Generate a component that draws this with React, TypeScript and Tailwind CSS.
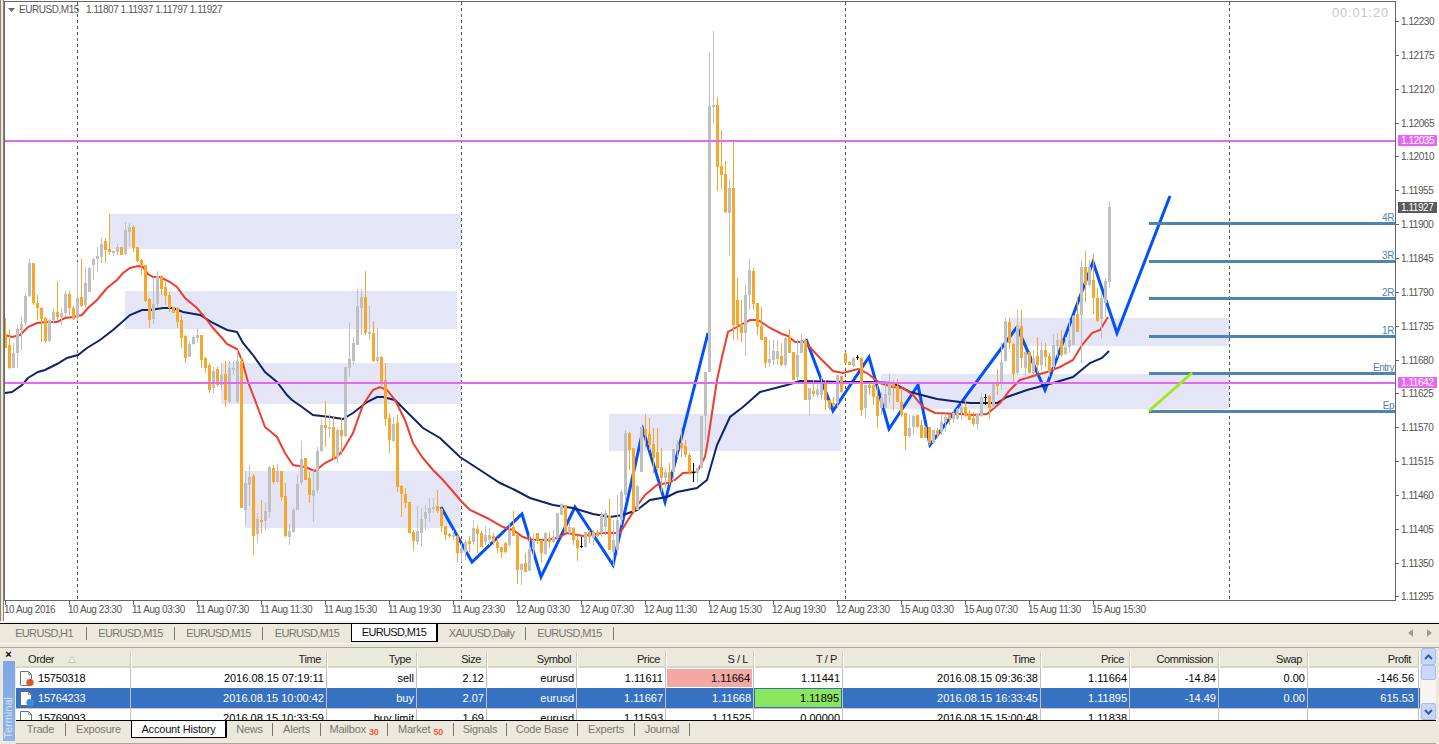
import React from 'react'

// [kind, high, low, bodyTop, bodyBottom], one bar every 4px starting at x=5
type Candle = [string, number, number, number, number]

const candles: Candle[] = [
  ['o',318,348,334,348],['o',329,369,345,368],['g',343,368,353,368],['g',325,368,329,353],['g',317,350,324,330],['g',293,325,296,323],
  ['g',259,297,263,296],['o',263,305,263,303],['o',295,320,303,308],['o',307,342,308,319],['o',317,343,318,341],['g',319,342,320,341],
  ['g',308,324,312,320],['o',281,320,312,317],['g',308,325,313,317],['g',291,317,294,313],['o',291,315,294,308],['o',306,320,308,319],
  ['g',262,321,298,318],['o',259,307,297,306],['g',267,308,283,305],['g',267,292,268,292],['g',258,280,259,265],['g',247,272,256,259],
  ['g',238,263,244,257],['o',238,263,241,250],['o',214,255,249,252],['g',250,256,251,253],['g',244,255,247,252],['o',247,255,247,255],
  ['g',222,255,230,254],['g',223,247,227,232],['o',225,252,227,248],['o',247,262,247,261],['o',259,275,260,266],['o',265,302,265,301],
  ['o',298,328,299,320],['g',277,324,304,319],['g',271,307,276,304],['o',275,295,276,289],['o',282,305,287,296],['o',292,312,295,308],
  ['o',307,313,307,313],['o',307,328,308,322],['o',315,348,320,338],['o',335,363,336,358],['g',341,357,344,357],['g',335,345,337,344],
  ['g',329,343,335,338],['o',335,368,335,360],['o',357,373,358,368],['o',363,393,365,390],['g',367,393,371,388],['o',367,387,369,385],
  ['g',363,390,375,385],['o',361,407,374,400],['g',361,403,368,402],['g',361,375,368,370],['g',350,403,361,402],['o',357,508,361,508],
  ['g',471,526,483,510],['g',465,506,477,485],['o',474,555,476,536],['g',513,543,519,534],['o',500,533,520,522],['g',503,530,511,521],
  ['g',466,518,467,512],['o',465,484,468,482],['g',464,483,471,482],['o',471,501,471,497],['o',483,537,496,536],['g',524,545,531,537],
  ['g',508,533,510,532],['g',475,510,484,510],['g',441,485,459,483],['o',458,480,458,480],['o',472,503,478,495],['g',470,522,490,496],
  ['g',447,493,451,490],['g',418,452,425,451],['o',401,447,425,428],['g',414,438,427,429],['o',417,460,427,458],['g',428,463,430,457],
  ['o',418,455,430,436],['g',367,437,367,436],['g',323,377,359,368],['g',337,365,343,361],['g',289,345,306,345],['g',289,335,297,308],
  ['o',271,335,297,333],['g',306,340,332,334],['o',321,362,333,361],['g',328,363,357,361],['o',356,385,357,383],['o',363,426,380,419],
  ['o',413,453,418,440],['g',417,442,424,441],['o',415,492,423,487],['o',485,517,486,494],['o',488,508,494,503],['o',502,533,502,533],
  ['o',530,551,532,541],['g',506,545,531,542],['g',508,547,519,533],['g',505,530,512,519],['g',498,522,508,513],['g',498,513,507,509],
  ['o',490,513,506,511],['o',508,532,509,526],['o',526,540,526,535],['o',533,538,534,536],['g',530,540,535,537],['o',535,562,536,553],
  ['g',543,562,548,553],['g',540,560,542,552],['o',536,552,541,544],['g',520,545,528,542],['o',525,553,529,534],
  ['o',531,547,533,547],['g',526,545,535,542],['g',528,545,535,540],['o',533,545,536,542],['o',538,553,542,548],['o',547,558,547,552],
  ['o',542,553,543,552],['g',523,547,530,545],['o',511,536,527,536],['o',535,584,535,570],['g',563,585,564,570],['o',553,572,563,572],
  ['g',533,570,549,571],['g',533,558,540,549],['o',533,544,533,541],['o',540,563,540,553],['g',532,555,533,554],['o',532,548,538,542],
  ['g',530,543,537,542],['g',513,540,513,538],['g',503,515,504,515],['o',505,533,505,532],['g',522,535,527,533],['o',527,545,528,540],
  ['o',535,561,540,548],['k',537,548,546,546],['g',532,548,532,547],['o',530,543,532,537],['g',530,545,532,538],['o',530,537,532,536],
  ['g',512,537,515,533],['g',510,535,513,527],['o',499,550,516,550],['g',520,566,540,552],['g',495,555,520,550],['g',490,525,492,520],
  ['g',430,500,433,495],['o',432,470,433,450],['o',448,512,448,512],['g',485,510,486,510],['g',427,472,427,472],['o',414,447,429,435],
  ['o',418,450,434,445],['o',428,473,444,458],['o',428,472,452,468],['o',448,492,467,478],['g',468,488,472,478],['o',463,485,472,482],
  ['g',449,482,449,472],['g',440,457,444,450],['o',428,457,443,448],['o',440,457,446,455],['o',453,475,455,472],['k',463,482,472,472],
  ['g',468,483,468,473],['g',416,468,416,468],['g',372,440,372,416],['g',52,372,106,372],['g',31,124,105,107],['o',97,191,105,167],
  ['o',130,189,166,175],['o',161,213,174,212],['g',179,256,188,213],['o',140,340,188,325],['o',278,340,300,325],['o',300,342,324,333],
  ['g',284,356,295,333],['g',259,310,270,295],['o',268,310,271,304],['o',303,335,303,327],['o',307,340,326,340],['o',337,368,337,363],
  ['g',340,367,359,363],['g',340,365,351,360],['g',340,365,351,359],['o',343,366,356,365],['g',337,367,338,365],['o',329,353,337,353],
  ['o',352,380,352,380],['g',339,380,355,377],['g',334,353,340,353],['o',338,400,340,400],['g',388,416,388,400],['o',380,397,391,394],
  ['g',382,398,389,395],['g',377,400,383,395],['o',380,410,383,400],['o',400,410,400,408],['o',397,407,403,405],['g',375,408,375,403],
  ['o',376,393,376,392],['o',352,364,353,363],['o',361,365,362,365],['g',357,367,358,366],['k',355,360,357,357],['o',357,416,358,410],
  ['g',385,418,385,408],['o',383,395,385,388],['o',382,405,385,397],['o',385,428,396,416],['g',392,415,398,408],['g',383,408,394,408],
  ['g',374,403,383,395],['o',380,410,382,387],['o',379,402,386,402],['o',390,417,402,415],['o',413,450,413,436],['g',415,438,428,436],
  ['g',415,435,416,427],['o',415,428,415,427],['o',420,438,425,438],['o',426,438,427,438],['o',427,445,427,443],['g',430,444,430,443],
  ['o',428,437,430,435],['g',415,435,422,432],['g',415,432,417,422],['o',415,425,415,419],['g',410,423,413,419],['g',408,420,409,419],
  ['g',403,420,407,413],['o',400,417,407,415],['o',410,420,414,420],['o',412,426,418,424],['g',413,430,414,424],['g',393,417,397,416],
  ['k',394,405,397,397],['o',395,419,396,408],['g',382,408,383,407],['o',369,395,383,386],['g',343,390,362,383],['g',318,362,321,361],
  ['o',318,349,322,343],['o',343,383,344,374],['g',310,375,325,373],['o',310,368,326,358],['g',350,378,352,368],['o',352,373,352,373],
  ['g',350,375,358,373],['o',337,373,356,365],['g',342,370,350,365],['o',343,367,350,357],['o',353,377,356,372],['g',334,370,345,367],
  ['g',333,357,340,346],['o',330,357,340,355],['g',337,355,347,354],['g',318,353,340,347],['g',315,345,316,345],['o',297,332,314,332],
  ['g',260,363,267,315],['o',251,302,267,285],['g',260,287,267,285],['o',254,314,280,298],['o',288,322,298,321],['g',293,339,298,319],
  ['g',278,317,281,303],['g',201,288,207,282],
]

const redMa = '5,335 12,337 20,335 28,327 37,323 47,322 57,322 65,318 73,317 82,315 88,308 97,300 107,288 117,280 123,273 130,268 138,266 143,267 148,274 153,277 160,277 170,282 177,287 185,298 197,308 207,320 213,328 222,338 227,344 237,349 242,360 248,382 255,400 265,427 277,437 285,453 293,465 305,467 315,471 325,463 337,457 343,450 353,433 363,405 373,390 380,387 387,390 395,400 405,420 413,443 422,457 433,470 443,480 462,502 470,510 487,518 503,527 513,530 523,537 533,540 547,540 557,538 567,533 583,536 603,533 620,533 628,520 637,506 645,495 657,485 667,483 675,480 683,473 697,472 705,457 708,440 712,413 717,380 722,357 728,332 737,327 750,320 758,320 770,328 782,334 788,336 795,342 805,342 820,358 833,371 843,373 858,369 867,373 880,383 893,387 903,388 913,395 923,407 935,413 960,414 973,415 987,414 1000,403 1010,390 1020,380 1030,377 1047,372 1060,367 1073,360 1082,345 1092,333 1100,330 1108,317'
const navyMa = '5,393 12,392 22,385 28,378 38,372 45,370 57,364 67,358 78,355 87,348 100,340 113,330 130,315 142,310 150,310 163,308 173,308 183,312 200,315 213,323 227,330 237,332 243,343 253,355 265,372 277,382 287,395 292,400 302,407 313,415 330,417 343,419 353,413 367,402 377,397 383,397 395,400 410,415 423,428 440,438 460,457 480,470 500,483 515,490 530,498 553,505 573,508 593,514 610,517 623,515 637,510 650,500 667,497 677,492 697,488 707,480 717,445 730,417 743,407 760,392 787,385 800,381 847,382 870,382 893,383 910,392 937,399 960,402 970,403 997,403 1007,397 1027,390 1053,383 1073,377 1090,363 1102,358 1109,351'
const zigzagA = '441,507 472,562 522,514 541,577 575,507 613,565 643,430 665,502 708,333'
const zigzagB = '806,339 833,411 869,357 889,429 918,385 930,445 1017,327 1045,390 1093,262 1117,333 1170,196'

const zones = [
  [109, 214, 352, 35], [125, 291, 332, 38], [221, 363, 240, 41], [245, 471, 216, 57],
  [609, 414, 232, 37], [881, 374, 348, 35], [1009, 318, 220, 28],
]
const levels = [
  { y: 222, label: '4R' }, { y: 260, label: '3R' }, { y: 297, label: '2R' },
  { y: 335, label: '1R' }, { y: 372, label: 'Entry' }, { y: 410, label: 'Ep' },
]
const prices = ['1.12230','1.12175','1.12120','1.12065','1.12010','1.11955','1.11900','1.11845','1.11790','1.11735','1.11680','1.11625','1.11570','1.11515','1.11460','1.11405','1.11350','1.11295']
const times = ['10 Aug 2016','10 Aug 23:30','11 Aug 03:30','11 Aug 07:30','11 Aug 11:30','11 Aug 15:30','11 Aug 19:30','11 Aug 23:30','12 Aug 03:30','12 Aug 07:30','12 Aug 11:30','12 Aug 15:30','12 Aug 19:30','12 Aug 23:30','15 Aug 03:30','15 Aug 07:30','15 Aug 11:30','15 Aug 15:30']

const candleColor: Record<string, string> = { o: '#f9a62d', g: '#c0c0c0', k: '#000000' }

function Chart() {
  return (
    <svg width="1439" height="621" viewBox="0 0 1439 621" className="block bg-white text-[10px] tracking-[-0.45px]">
      <g shapeRendering="crispEdges">
        {zones.map(([x, y, w, h]) => <rect key={x} x={x} y={y} width={w} height={h} fill="#e4e5f7" />)}
        {[77, 461, 845, 1229].map(x => <line key={x} x1={x + 0.5} x2={x + 0.5} y1={2} y2={600} stroke="#555" strokeDasharray="3 3" />)}
      </g>
      <polyline points={zigzagA} fill="none" stroke="#0050ff" strokeWidth="3" />
      <polyline points={zigzagB} fill="none" stroke="#0050ff" strokeWidth="3" />
      <polyline points={navyMa} fill="none" stroke="#10246b" strokeWidth="2" />
      <polyline points={redMa} fill="none" stroke="#ef3d2e" strokeWidth="2" />
      <g shapeRendering="crispEdges">
        {candles.map(([kind, hi, lo, top, bottom], i) => {
          const x = 5 + i * 4
          return (
            <g key={i} fill={candleColor[kind]}>
              <rect x={x} y={hi} width={1} height={lo - hi} />
              <rect x={x - 1} y={top} width={3} height={Math.max(bottom - top, 1)} />
            </g>
          )
        })}
        <rect x={5} y={140} width={1390} height={2} fill="#e766f3" />
        <rect x={5} y={382} width={1390} height={2} fill="#e766f3" />
        {levels.map(l => <rect key={l.y} x={1149} y={l.y} width={246} height={3} fill="#4f84b2" />)}
      </g>
      <line x1={1149} y1={411} x2={1192} y2={373} stroke="#a0e81e" strokeWidth="3" />
      {levels.map(l => <text key={l.label} x={1394} y={l.y - 1} textAnchor="end" fill="#4f84b2">{l.label}</text>)}

      {/* frame and axes */}
      <g shapeRendering="crispEdges" fill="#666">
        <rect x={0} y={0} width={1} height={621} fill="#8a8678" />
        <rect x={1} y={0} width={3} height={621} fill="#ebe8dc" />
        <rect x={3} y={0} width={1} height={621} fill="#8a8678" />
        <rect x={4} y={1} width={1392} height={1} />
        <rect x={4} y={1} width={1} height={600} />
        <rect x={4} y={600} width={1392} height={1} />
        <rect x={1395} y={1} width={1} height={600} />
        {prices.map((_, i) => <rect key={i} x={1396} y={Math.round(21 + i * 33.85)} width={3} height={1} />)}
        {times.map((_, i) => <rect key={i} x={5 + i * 64} y={601} width={1} height={4} />)}
      </g>
      <g fill="#555">
        {prices.map((p, i) => <text key={p} x={1401} y={Math.round(25 + i * 33.85)}>{p}</text>)}
        {times.map((t, i) => <text key={i} x={4 + i * 64} y={613}>{t}</text>)}
        <path d="M8 8h7l-3.5 4z" fill="#666" />
        <text x={19} y={13}>EURUSD,M15</text>
        <text x={86} y={13}>1.11807 1.11937 1.11797 1.11927</text>
      </g>
      <text x={1332} y={17} fill="#c8c8c8" className="text-[13px] tracking-[0.8px]">00:01:20</text>

      <g shapeRendering="crispEdges">
        <rect x={1398} y={135} width={39} height={11} fill="#e766f3" />
        <rect x={1398} y={202} width={39} height={11} fill="#5a5a5a" />
        <rect x={1398} y={377} width={39} height={11} fill="#e766f3" />
      </g>
      <g fill="#fff">
        <text x={1401} y={144}>1.12035</text>
        <text x={1401} y={211}>1.11927</text>
        <text x={1401} y={386}>1.11642</text>
      </g>
    </svg>
  )
}

const chartTabs = [
  { label: 'EURUSD,H1', w: 'w-[85px]' },
  { label: 'EURUSD,M15', w: 'w-[88px]' },
  { label: 'EURUSD,M15', w: 'w-[88px]' },
  { label: 'EURUSD,M15', w: 'w-[88px]', hideSep: true },
  { label: 'EURUSD,M15', w: 'w-[87px]', active: true },
  { label: 'XAUUSD,Daily', w: 'w-[88px]' },
  { label: 'EURUSD,M15', w: 'w-[88px]' },
]

function ChartTabs() {
  return (
    <div className="flex h-5 items-start border-t border-black bg-[#ebe8dc] pl-[2px] tracking-[-0.65px]">
      {chartTabs.map((t, i) => t.active ? (
        <div key={i} className={t.w + ' flex h-[18px] items-center justify-center border-x border-b border-black border-r-2 bg-white text-[#111]'}>{t.label}</div>
      ) : (
        <div key={i} className={t.w + ' flex h-[18px] items-center justify-center text-[#77776f]'}>
          <span className="flex-1 text-center">{t.label}</span>
          {!t.hideSep && <span className="h-[13px] w-px bg-[#77776f]" />}
        </div>
      ))}
      <div className="ml-auto flex h-[18px] items-center gap-[14px] pr-[7px]">
        <svg width="5" height="8"><path d="M5 0v8L0 4z" fill="#a09d92" /></svg>
        <svg width="5" height="8"><path d="M0 0v8l5-4z" fill="#a09d92" /></svg>
      </div>
    </div>
  )
}

const gridCols = 'grid grid-cols-[115px_196px_90px_70px_90px_89px_88px_89px_198px_89px_89px_89px_111px]'
const headers = ['Order', 'Time', 'Type', 'Size', 'Symbol', 'Price', 'S / L', 'T / P', 'Time', 'Price', 'Commission', 'Swap', 'Profit']

const rows = [
  { dot: '#e5501c', cells: ['15750318', '2016.08.15 07:19:11', 'sell', '2.12', 'eurusd', '1.11611', '1.11664', '1.11441', '2016.08.15 09:36:38', '1.11664', '-14.84', '0.00', '-146.56'] },
  { dot: '#2d8fe6', selected: true, cells: ['15764233', '2016.08.15 10:00:42', 'buy', '2.07', 'eurusd', '1.11667', '1.11668', '1.11895', '2016.08.15 16:33:45', '1.11895', '-14.49', '0.00', '615.53'] },
  { cells: ['15769093', '2016.08.15 10:33:59', 'buy limit', '1.69', 'eurusd', '1.11593', '1.11525', '0.00000', '2016.08.15 15:00:48', '1.11838', '', '', ''] },
]

function OrderIcon({ dot }: { dot?: string }) {
  return (
    <svg width="16" height="17" viewBox="0 0 16 17" className="shrink-0">
      <path d="M1.5 1.5h8l3 3v10a1 1 0 0 1-1 1h-9a1 1 0 0 1-1-1z" fill="#fff" stroke="#6d6d6d" />
      <path d="M9.5 1.5v3h3" fill="none" stroke="#9a9a9a" />
      {dot && <circle cx="11" cy="12.5" r="3.5" fill={dot} stroke="#8a8a8a" strokeWidth="0.5" />}
    </svg>
  )
}

function OrdersTable() {
  return (
    <div className="h-[72px] flex-1 overflow-hidden bg-white text-black">
      <div className={gridCols + ' h-[18px] bg-[#ebe8dc] tracking-[-0.4px] text-[#222]'}>
        {headers.map((h, i) => (
          <div key={i} className={'my-[3px] flex items-center justify-end border-r border-[#d0ccbc] shadow-[1px_0_0_#fff] ' + (i === 12 ? 'pr-[7px]' : 'pr-[5px]')}>
            {i === 0 ? (
              <span className="flex flex-1 items-center pl-3">
                {h}
                <svg width="8" height="7" className="ml-[14px]"><path d="M4 .5l3.5 6H.5z" fill="#f5f3ea" stroke="#c8c4b4" /></svg>
              </span>
            ) : h}
          </div>
        ))}
      </div>
      <div className="h-[2px] bg-[#d9d4c6]" />
      {rows.map((r, ri) => (
        <div key={ri} className={gridCols + ' h-5 ' + (r.selected ? 'bg-[#3671c2] text-white' : ri === 2 ? 'border-t border-[#c8c8c8]' : '')}>
          {r.cells.map((c, i) => {
            if (i === 0) return (
              <div key={i} className="flex items-center gap-[3px] border-r border-[#c0c0c0] pl-[3px] tracking-[-0.2px]">
                <OrderIcon dot={r.dot} /><span>{c}</span>
              </div>
            )
            const pink = ri === 0 && i === 6
            const green = ri === 1 && i === 7
            return (
              <div key={i} className="flex items-stretch border-r border-[#c0c0c0]">
                <div className={'flex flex-1 items-center justify-end ' + (i === 12 ? 'pr-[4px] ' : 'pr-[2px] ') + (pink ? 'm-[1px] bg-[#f4a8a4]' : green ? 'border border-[#2f6fb0] bg-[#8ae65f] text-black' : '')}>{c}</div>
              </div>
            )
          })}
        </div>
      ))}
    </div>
  )
}

function Chevron({ up }: { up?: boolean }) {
  return (
    <svg width="9" height="6" viewBox="0 0 9 6">
      <path d={up ? 'M1 5l3.5-3.5L8 5' : 'M1 1l3.5 3.5L8 1'} fill="none" stroke="#3b5b9c" strokeWidth="2" />
    </svg>
  )
}

function Scrollbar() {
  const btn = 'flex h-[17px] items-center justify-center rounded-[2px] border border-[#a9bde6] bg-[#c5d5fb]'
  return (
    <div className="flex h-[72px] w-[15px] flex-col bg-[#f6f5ef] ml-[1px]">
      <div className={btn}><Chevron up /></div>
      <div className="h-[15px] rounded-[2px] border border-[#a9bde6] bg-[#c9d8fb]" />
      <div className="flex-1" />
      <div className={btn}><Chevron /></div>
    </div>
  )
}

const terminalTabs = [
  { label: 'Trade', w: 'w-[50px]' },
  { label: 'Exposure', w: 'w-[65px]', hideSep: true },
  { label: 'Account History', w: 'w-[96px]', active: true },
  { label: 'News', w: 'w-[46px]' },
  { label: 'Alerts', w: 'w-[48px]' },
  { label: 'Mailbox', w: 'w-[67px]', badge: '30' },
  { label: 'Market', w: 'w-[66px]', badge: '50' },
  { label: 'Signals', w: 'w-[53px]' },
  { label: 'Code Base', w: 'w-[71px]' },
  { label: 'Experts', w: 'w-[57px]' },
  { label: 'Journal', w: 'w-[55px]' },
]

function TerminalTabs() {
  return (
    <div className="flex h-[21px] items-start border-t border-black tracking-[-0.2px]">
      {terminalTabs.map(t => t.active ? (
        <div key={t.label} className={t.w + ' flex h-[17px] items-center justify-center border-x border-b border-black border-r-2 bg-white text-[#111]'}>{t.label}</div>
      ) : (
        <div key={t.label} className={t.w + ' flex h-[17px] items-center text-[#77776f]'}>
          <span className="flex flex-1 items-center justify-center">
            {t.label}
            {t.badge && <span className="ml-[3px] mt-[5px] text-[9px] font-bold leading-none text-[#ee5a4c]">{t.badge}</span>}
          </span>
          {!t.hideSep && <span className="h-[13px] w-px bg-[#77776f]" />}
        </div>
      ))}
    </div>
  )
}

export default function App() {
  return (
    <div className="flex h-[744px] w-[1439px] flex-col overflow-hidden bg-[#ebe8dc] font-['Liberation_Sans',Arial,sans-serif] text-[11px]">
      <Chart />
      <div className="h-[2px] bg-[#f6f4ec]" />
      <ChartTabs />
      <div className="h-[4px] border-t border-[#f6f4ec]" />
      <div className="flex flex-1 border-t border-[#aca899]">
        {/* left dock strip */}
        <div className="flex w-4 flex-col items-center pl-[1px]">
          <div className="flex h-[13px] items-center text-[11px] font-bold leading-none text-black">×</div>
          <div className="flex h-[80px] w-3 items-end justify-center bg-gradient-to-b from-[#7fa8e6] to-[#8fb2e8] pb-[2px]">
            <span className="rotate-180 text-[11px] leading-none text-[#d6e2f5] [writing-mode:vertical-rl]">Terminal</span>
          </div>
        </div>
        <div className="flex flex-1 flex-col pr-[3px]">
          <div className="flex">
            <OrdersTable />
            <Scrollbar />
          </div>
          <TerminalTabs />
          <div className="mt-[2px] h-px bg-[#aca899]" />
        </div>
      </div>
    </div>
  )
}
